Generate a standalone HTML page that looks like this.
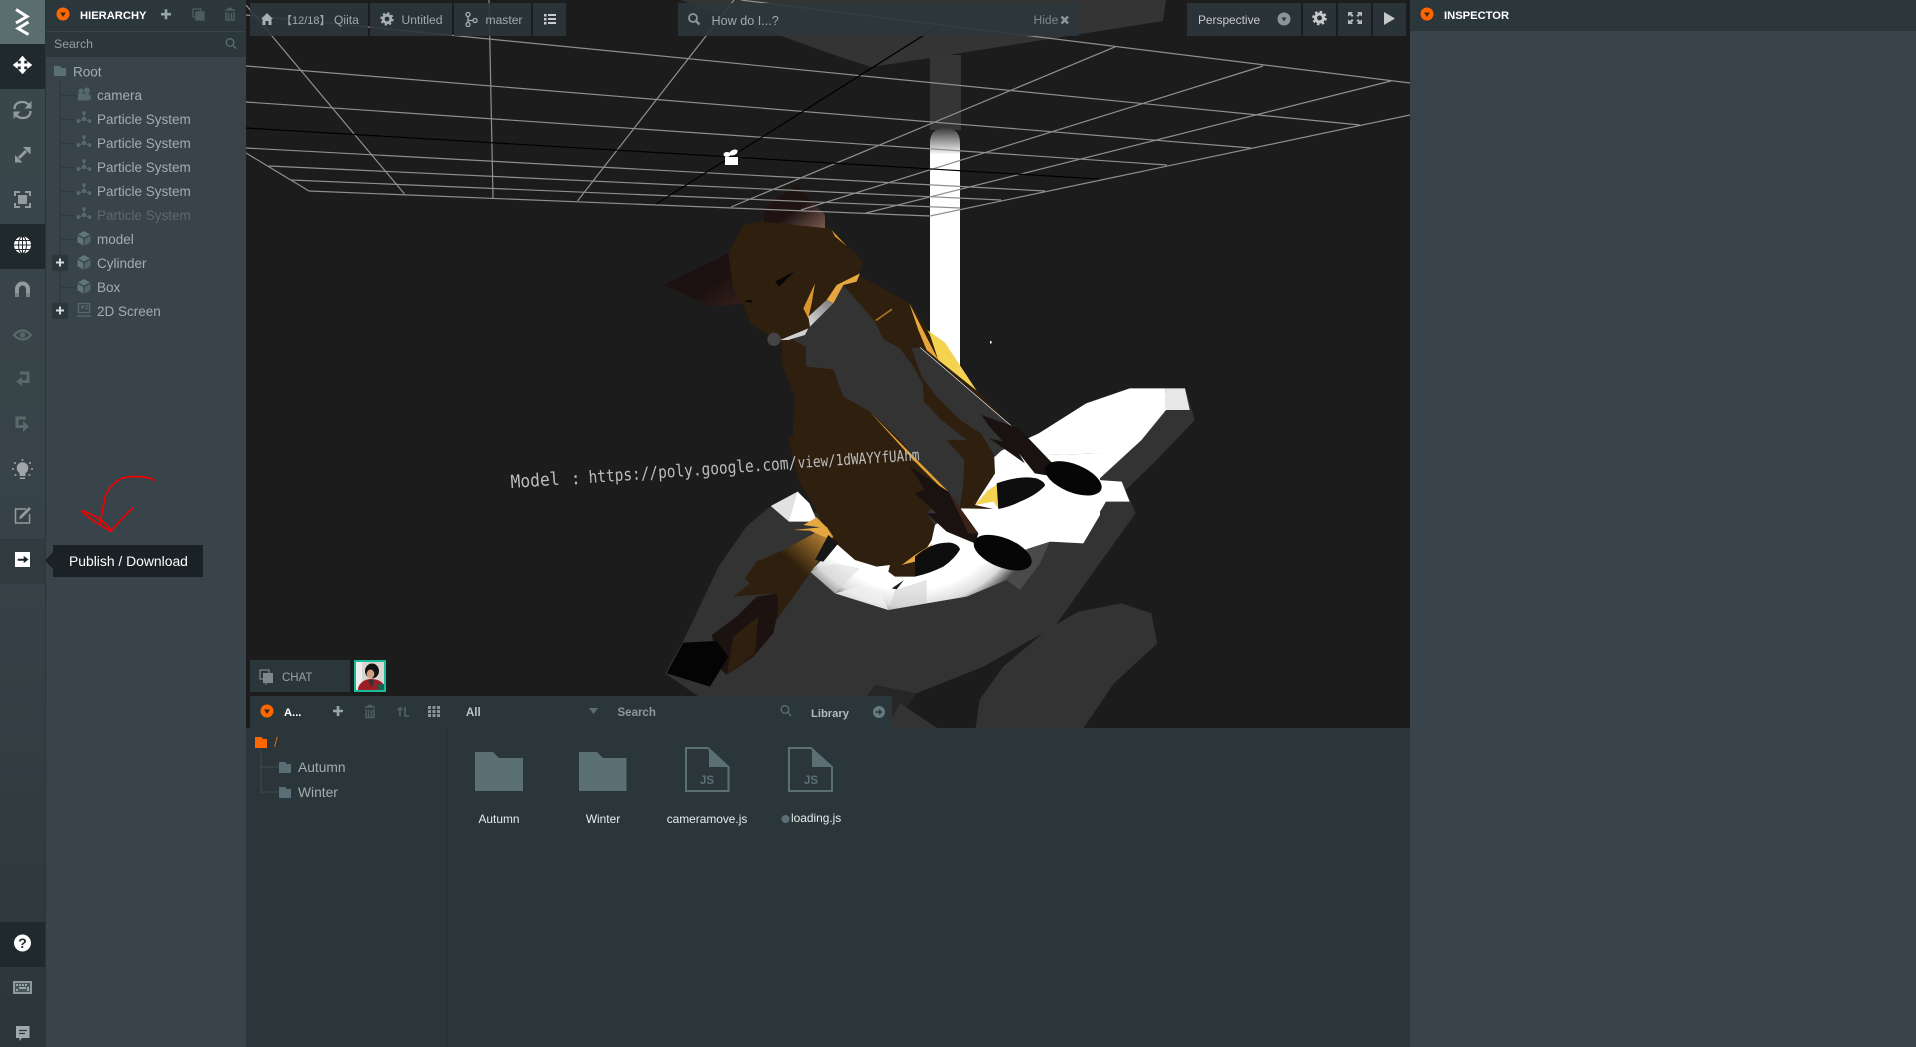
<!DOCTYPE html>
<html><head><meta charset="utf-8"><title>Editor</title>
<style>
html,body{margin:0;padding:0;background:#1c1c1c;width:1916px;height:1047px;overflow:hidden}
svg{display:block;position:absolute;left:0;top:0}
text{font-family:"Liberation Sans","Noto Sans CJK JP",sans-serif;font-size:13.5px;fill:#a3adaf}
.b{font-weight:bold;font-size:11.2px;fill:#fff}
.t{font-size:12.1px;fill:#a2a9aa}
.l{font-size:11.9px;fill:#e8ecec}
.m{font-family:"DejaVu Sans Mono","Liberation Mono",monospace;fill:#bdbdbd}
</style></head><body>
<svg width="1916" height="1047" viewBox="0 0 1916 1047" xmlns="http://www.w3.org/2000/svg">
<defs>
<linearGradient id="sb" x1="0" y1="0" x2="0" y2="1"><stop offset="0" stop-color="#3a474b"/><stop offset=".55" stop-color="#364247"/><stop offset="1" stop-color="#2b363a"/></linearGradient>
<linearGradient id="pole" x1="0" y1="0" x2="0" y2="1"><stop offset="0" stop-color="#3a3a3a"/><stop offset="1" stop-color="#fff"/></linearGradient>
<linearGradient id="ear" x1="0" y1="0" x2="1" y2="1"><stop offset=".55" stop-color="#1e1311"/><stop offset="1" stop-color="#7a5a50"/></linearGradient>
<linearGradient id="earl" x1="0" y1="0" x2="1" y2="1"><stop offset=".6" stop-color="#1c1110"/><stop offset="1" stop-color="#35211c"/></linearGradient>
<linearGradient id="tailg" x1="0" y1="1" x2="1" y2="0"><stop offset=".6" stop-color="#2e1f0e"/><stop offset="1" stop-color="#d99a3c"/></linearGradient>
<linearGradient id="col" x1="0" y1="1" x2="1" y2="0"><stop offset="0" stop-color="#dedede"/><stop offset="1" stop-color="#777"/></linearGradient>
<radialGradient id="arc" gradientUnits="userSpaceOnUse" cx="390" cy="130" r="410"><stop offset=".78" stop-color="#fff"/><stop offset=".9" stop-color="#ddd"/><stop offset="1" stop-color="#4a4a4a"/></radialGradient>
<g id="cube"><path d="M0-7 6-3.6 0-.4-6-3.6Z" fill="#62767a"/><path d="M-6.500-2.400-.7.900V7.500L-6.500 4.200Z" fill="#62767a"/><path d="M6.500-2.400.7.900V7.500L6.500 4.200Z" fill="#53666a"/></g>
<g id="part" fill="#566a6e"><circle cx="0" cy="-5" r="1.900"/><circle cx="-5.500" cy="3" r="1.900"/><circle cx="5.500" cy="3" r="1.900"/><circle cx="0" cy="1" r="2.200"/><path d="M-.5-4h1V1h-1z"/><path d="M-5 2.500 0 .5 5 2.500 5 3.500 0 1.500-5 3.500Z"/></g>
</defs>

<!-- viewport -->
<rect x="246" y="0" width="1164" height="728" fill="#1c1c1c"/>
<polygon points="680,0 840,57 871,67 930,58 961,53 1163,21 1166,0" fill="#343434"/>
<rect x="930" y="55" width="31" height="75" fill="#353535"/>
<path d="M930 155V143Q930 128 945 128Q960 128 960 143V155Z" fill="url(#pole)"/>
<rect x="930" y="154" width="30" height="212" fill="#fff"/>

<!-- gray hand -->
<g transform="translate(600 220) scale(.39526 .33333)">
<polygon points="950,1530 960,1440 1020,1340 1130,1230 1210,1175 1320,1150 1395,1180 1410,1270 1300,1390 1220,1530" fill="#333"/>
<polygon points="430,860 370,920 300,1040 210,1265 165,1360 250,1430 675,1430 695,1395 800,1420 970,1340 1150,1220 1270,1020 1355,880 1330,810 1400,730 1505,600 1480,505 1340,505 1000,720 900,900 560,880" fill="#333"/>
<polygon points="675,1430 695,1395 800,1420 740,1530 660,1530" fill="#262626"/>
<polygon points="760,1450 860,1530 720,1530" fill="#333"/>
<polygon points="432,858 500,815 545,890 478,905" fill="#e2e2e2"/>
<polygon points="500,815 530,850 550,905 478,905" fill="#fff"/>
<polygon points="1000,700 1110,640 1230,550 1340,505 1430,505 1432,570 1370,660 1260,780 1320,785 1340,845 1280,845 1220,965 1000,965" fill="#fff"/>
<polygon points="1430,505 1480,505 1492,570 1432,570" fill="#e8e8e8"/>
</g>
<!-- white arc and lower body (3x crop coords) -->
<g transform="translate(780 440) scale(.33333)">
<polygon points="90,395 175,310 330,340 450,250 560,180 645,50 960,40 960,225 910,310 810,305 780,370 720,450 680,420 560,470 440,490 325,510 165,460" fill="url(#arc)"/>
<polygon points="640,50 960,40 960,225 910,310 810,305 700,340 560,390 440,400 450,260" fill="#fff"/>
<polygon points="90,395 165,370 240,385 165,460" fill="#d8d8d8" fill-opacity=".5"/>
<polygon points="165,460 235,440 305,465 325,510" fill="#f0f0f0" fill-opacity=".8"/>
<polygon points="325,510 345,450 440,420 440,490" fill="#ccc" fill-opacity=".55"/>
<polygon points="335,445 372,420 350,448" fill="#222"/>
<!-- lower body -->
<polygon points="25,-10 360,-10 640,-10 645,100 600,170 585,195 640,207 545,205 480,230 440,210 465,255 455,300 410,375 405,410 345,410 325,395 330,375 290,380 225,360 145,290 105,205 60,130 40,60" fill="#2e1f0e"/>
</g>
<!-- left ear + upper body (3x crop coords) -->
<g transform="translate(700 220) scale(.33333)">
<polygon points="-111,195 85,100 100,210 130,250 37,260" fill="url(#earl)"/>
<polygon points="85,100 130,15 195,0 375,20 395,30 490,125 475,165 630,250 690,340 715,420 830,510 900,580 900,680 280,680 280,600 285,530 245,430 245,365 205,345 150,310 130,250 100,210" fill="#2e1f0e"/>
<polygon points="430,195 525,305 550,358 600,385 640,440 668,490 672,545 725,600 800,660 600,660 510,575 430,530 400,448 318,440 318,382 280,360 325,325 335,290 380,240" fill="#333"/>
<polygon points="635,385 660,382 960,640 885,710 843,640 780,600 710,530 665,470" fill="#333"/>
<path d="M660 382 960 640" stroke="#e8e8e8" stroke-width="2" fill="none"/>
<polygon points="682,330 735,368 830,512 715,420 690,345" fill="#f5d250"/>
<polygon points="628,250 715,420 680,390 655,330" fill="#e8a63c"/>
<polygon points="380,240 410,195 480,160 470,185 430,195 400,250" fill="#e6a640"/>
<polygon points="345,190 310,265 325,295 335,250" fill="#d9962f"/>
<polygon points="395,30 440,78 405,50" fill="#d9962f"/>
<polygon points="525,300 575,265 577,270 530,303" fill="#a56f24"/>
<polygon points="380,240 400,250 330,320 325,290" fill="url(#col)"/>
<polygon points="240,360 325,325 315,345 265,360" fill="#d0d0d0"/>
<circle cx="222" cy="358" r="20" fill="#444"/>
<polygon points="225,185 282,155 238,200" fill="#070707"/>
<polygon points="132,245 150,238 160,248" fill="#070707"/>
</g>
<!-- chest continuation, legs, paws -->
<g transform="translate(780 440) scale(.33333)">
<polygon points="355,-5 495,-5 553,60 550,130 540,200 465,255 440,220 500,155" fill="#333"/>
<polygon points="270,-84 505,155 495,155 400,60" fill="#e3a133"/>
</g>
<g transform="translate(600 220) scale(.39526 .33333)">
<polygon points="965,585 1060,625 1145,730 1150,770 1100,760 1060,700 1075,730 985,655 1020,665 985,620" fill="#1a1210"/>
</g>
<g transform="translate(780 440) scale(.33333)">
<ellipse cx="880" cy="115" rx="90" ry="42" transform="rotate(22 880 115)" fill="#060606"/>
<polygon points="585,195 625,150 670,122 652,130 655,205 640,185" fill="#f5d250"/>
<path d="M650 130Q720 105 770 115Q795 125 795 137Q770 165 720 185Q690 200 655 207Z" fill="#0e0e0e"/>
<polygon points="390,80 505,155 595,280 585,310 500,275 440,220 470,220 405,160 435,150" fill="#1a1210"/>
<polygon points="505,155 595,280 565,280" fill="#3a2218"/>
<ellipse cx="668" cy="338" rx="92" ry="44" transform="rotate(22 668 338)" fill="#060606"/>
<polygon points="365,375 405,345 460,310 405,365" fill="#e6a640"/>
<path d="M405 350Q455 305 510 308Q535 312 540 328Q525 355 490 380Q450 400 405 410Z" fill="#0e0e0e"/>
</g>
<!-- tail -->
<g transform="translate(440 440) scale(.33333)">
<polygon points="1180,290 1110,400 1010,540 1010,460 880,470 930,430 915,415 950,365 1030,330 1160,260" fill="url(#tailg)"/>
<polygon points="1090,255 1130,232 1160,262 1178,295 1150,290 1110,272 1060,270 1140,262" fill="#e6a640"/>
<polygon points="1165,285 1195,310 1150,365 1125,360" fill="#161616"/>
<polygon points="1010,460 1015,510 1000,580 940,650 860,705 845,690 815,585 890,530 950,470" fill="#1c1210"/>
<polygon points="955,530 945,640 860,705 880,590" fill="#2e1f0e"/>
<polygon points="680,700 730,608 830,603 865,650 810,740" fill="#040404"/>
</g>
<!-- ear top -->
<polygon points="764,222 764,208 797,184 812,202 825,215 825,228" fill="url(#ear)"/>

<!-- grid -->
<g stroke="#8f8f8f" stroke-width="1.200" fill="none">
<path d="M309 191 930 216"/><path d="M291 180 960 208"/><path d="M269 166 1001 200"/><path d="M246 148 1045 191"/>
<path d="M246 102 1167 165"/><path d="M246 66 1251 148"/><path d="M246 15 1360 125"/><path d="M741 0 1410 83"/>
<path d="M246 153 309 191"/><path d="M930 216 1410 115"/>
<path d="M246 5 404.500 194"/><path d="M489 0 493 198"/><path d="M734 0 577.500 201"/>
<path d="M731 207 1115.500 46.700"/><path d="M801 210 1263 66"/><path d="M866 213 1391 81"/>
</g>
<g stroke="#000" stroke-width="1.200" fill="none"><path d="M246 128 1099 179"/><path d="M656 204 940 25"/></g>

<!-- camera gizmo -->
<g fill="#fff"><rect x="725" y="157" width="13" height="8"/><ellipse cx="727" cy="154.500" rx="3.500" ry="2.500"/><ellipse cx="733.500" cy="152.500" rx="4.500" ry="2.600" transform="rotate(-25 733.500 152.500)"/></g>
<rect x="990" y="341" width="1.500" height="2.500" fill="#fff"/>

<!-- model text -->
<text class="m" transform="translate(511 488) rotate(-3.800)" x="0" y="0" style="font-size:18px" textLength="49" lengthAdjust="spacingAndGlyphs">Model</text>
<text class="m" transform="translate(571 484.500) rotate(-3.800)" x="0" y="0" style="font-size:17px">:</text>
<text class="m" transform="translate(589 483) rotate(-4)" x="0" y="0" style="font-size:17px" textLength="209" lengthAdjust="spacingAndGlyphs">https://poly.google.com/</text>
<text class="m" transform="translate(798 468) rotate(-3.700)" x="0" y="0" style="font-size:15.500px" textLength="122" lengthAdjust="spacingAndGlyphs">view/1dWAYYfUAhm</text>

<!-- top toolbar buttons -->
<g fill="#2c363b" fill-opacity=".9">
<rect x="250" y="3" width="118" height="33"/><rect x="370" y="3" width="82" height="33"/><rect x="454" y="3" width="77" height="33"/><rect x="533" y="3" width="33" height="33"/>
<rect x="678" y="3" width="401" height="33"/>
<rect x="1187" y="3" width="114" height="33"/><rect x="1303" y="3" width="33" height="33"/><rect x="1338" y="3" width="33" height="33"/><rect x="1373" y="3" width="33" height="33"/>
</g>
<path d="M267 13 273 19H271.500V25H268.500V21H265.500V25H262.500V19H261Z" fill="#a9b0b1"/>
<text x="281" y="24" style="font-size:11px;fill:#a2a9aa">【12/18】</text>
<text x="334" y="24" class="t">Qiita</text>
<g fill="none" stroke="#a9b0b1"><circle cx="387" cy="19" r="3.800" stroke-width="2.800"/><circle cx="387" cy="19" r="5.800" stroke-width="1.800" stroke-dasharray="2.300 2.250"/></g>
<text x="401.500" y="24" class="t">Untitled</text>
<g fill="none" stroke="#a9b0b1" stroke-width="1.300"><circle cx="468" cy="14.500" r="2"/><circle cx="468" cy="24.500" r="2"/><circle cx="475" cy="20.500" r="2"/><path d="M468 16.500V22.500M468 20.500H473"/></g>
<text x="485.500" y="24" class="t">master</text>
<g fill="#c8cdcd"><rect x="544" y="14" width="2.500" height="2.500"/><rect x="544" y="18" width="2.500" height="2.500"/><rect x="544" y="22" width="2.500" height="2.500"/><rect x="548" y="14" width="8" height="2"/><rect x="548" y="18" width="8" height="2"/><rect x="548" y="22" width="8" height="2"/></g>
<g fill="none" stroke="#8e9698" stroke-width="1.800"><circle cx="693" cy="18" r="4"/><path d="M696 21 699.500 24.500" stroke-width="2.400"/></g>
<text x="711.500" y="25" class="t" style="font-size:12.600px">How do I...?</text>
<text x="1033.500" y="24" class="t" style="fill:#808787">Hide</text>
<path d="M1061.500 16.500 1068 23.500M1068 16.500 1061.500 23.500" stroke="#8f9697" stroke-width="2.400"/>
<text x="1198" y="24" class="t" style="fill:#c7cbcb;font-size:11.900px">Perspective</text>
<circle cx="1284" cy="19" r="6.500" fill="#8b9496"/><path d="M1281.500 17.500H1286.500L1284 21.500Z" fill="#2c363b"/>
<g fill="none" stroke="#c6cbcb"><circle cx="1319.500" cy="18" r="4" stroke-width="3"/><circle cx="1319.500" cy="18" r="6.300" stroke-width="2" stroke-dasharray="2.500 2.450"/></g>
<g fill="#b5bbbb"><path d="M1348 12h5l-1.500 1.500 2 2-1.500 1.500-2-2-2 1.500zM1362 12h-5l1.500 1.500-2 2 1.500 1.500 2-2 2 1.500zM1348 24h5l-1.500-1.500 2-2-1.500-1.500-2 2-2-1.500zM1362 24h-5l1.500-1.500-2-2 1.500-1.500 2 2 2-1.500z"/></g>
<path d="M1384 12V25L1395 18.500Z" fill="#c3c8c8"/>

<!-- chat -->
<rect x="250" y="660" width="100" height="32" fill="#2b363b"/>
<g><rect x="260" y="670" width="9" height="9" fill="none" stroke="#7d898b" stroke-width="1.200"/><path d="M263 673H273V683H267.500L265.500 685V683H263Z" fill="#7d898b"/></g>
<text x="282" y="681" style="font-size:11.500px;fill:#98a2a3">CHAT</text>
<!-- avatar -->
<rect x="354" y="660" width="32" height="32" fill="#1abc9c"/>
<rect x="356" y="662" width="28" height="28" fill="#d9d6d2"/>
<rect x="356" y="662" width="6" height="28" fill="#eee"/>
<ellipse cx="372" cy="671" rx="7" ry="7.500" fill="#141414"/>
<ellipse cx="370.500" cy="674" rx="3.800" ry="4.500" fill="#cfa284"/>
<path d="M358 690C358 684 364 679 371 679C378 679 383 682 384 686V690Z" fill="#9c1e22"/>
<path d="M368 680 374 680 372 688Z" fill="#333"/>
<rect x="378" y="684" width="6" height="6" fill="#1d5f55"/>

<!-- hierarchy panel -->
<rect x="46" y="0" width="200" height="1047" fill="#38444a"/>
<rect x="46" y="0" width="200" height="31" fill="#2c373c"/>
<rect x="46" y="31" width="200" height="1" fill="#38444a"/>
<rect x="46" y="32" width="200" height="25" fill="#2c373c"/>
<circle cx="63" cy="14" r="6.500" fill="#f60"/><path d="M60 12.500H66L63 17Z" fill="#3a2a1a"/>
<text x="80" y="19" class="b">HIERARCHY</text>
<path d="M161 14.200H171M166 9.200V19.200" stroke="#98a5a7" stroke-width="2.600"/>
<g fill="none" stroke="#4f5d61" stroke-width="1.300"><rect x="193" y="9" width="8" height="8"/><rect x="196" y="12" width="8" height="8" fill="#4f5d61"/></g>
<path d="M225 10H235M226 12V20H234V12M228.500 13V19M231.500 13V19M228.500 10V8.500H231.500V10" fill="none" stroke="#4f5d61" stroke-width="1.500"/>
<text x="54" y="48" style="font-size:12.300px;fill:#939ea0">Search</text>
<g fill="none" stroke="#5f6e72" stroke-width="1.300"><circle cx="230" cy="42.500" r="3.800"/><path d="M233 45.500 236 48.500"/></g>

<!-- tree lines -->
<g stroke="#303b40" stroke-width="1.300" fill="none">
<path d="M60 80V312"/><path d="M60 95.500H76M60 119.500H76M60 143.500H76M60 167.500H76M60 191.500H76M60 215.500H76M60 239.500H76M60 287.500H76"/>
</g>
<path d="M54 66H60L62 68H66V76H54Z" fill="#5a6f75"/>
<text x="73" y="76.500">Root</text>
<g fill="#566a6e"><circle cx="81" cy="91" r="2.500"/><circle cx="87" cy="90.500" r="3"/><rect x="78" y="93.500" width="11" height="7"/><path d="M89 96 91 94.500V100L89 98.500Z"/></g>
<use href="#part" x="84" y="118"/><use href="#part" x="84" y="142"/><use href="#part" x="84" y="166"/><use href="#part" x="84" y="190"/><use href="#part" x="84" y="214"/>
<use href="#cube" x="84" y="238"/><use href="#cube" x="84" y="262"/><use href="#cube" x="84" y="286"/>
<g fill="none" stroke="#566a6e" stroke-width="1.300"><rect x="78.500" y="303.500" width="11" height="9"/><path d="M77 316H91"/></g><rect x="81" y="305.500" width="3" height="3" fill="#566a6e"/><rect x="85" y="305.500" width="3" height="1.200" fill="#566a6e"/><rect x="85" y="308" width="3" height="1.200" fill="#566a6e"/>
<text x="97" y="100">camera</text>
<text x="97" y="124">Particle System</text>
<text x="97" y="148">Particle System</text>
<text x="97" y="172">Particle System</text>
<text x="97" y="196">Particle System</text>
<text x="97" y="220" style="fill:#5d686b">Particle System</text>
<text x="97" y="244">model</text>
<text x="97" y="268">Cylinder</text>
<text x="97" y="292">Box</text>
<text x="97" y="316">2D Screen</text>
<rect x="52" y="255" width="16" height="16" fill="#2c373c"/><path d="M56 262.500H64M60 258.500V266.500" stroke="#d5dadb" stroke-width="2"/>
<rect x="52" y="303" width="16" height="16" fill="#2c373c"/><path d="M56 310.500H64M60 306.500V314.500" stroke="#d5dadb" stroke-width="2"/>

<!-- sidebar -->
<rect x="0" y="0" width="45" height="1047" fill="url(#sb)"/>
<rect x="45" y="0" width="1" height="1047" fill="#2a3539"/>
<rect x="0" y="0" width="45" height="44" fill="#5b6e6f"/>
<path d="M16 9.500 27 16.500 16 23M28.500 22 18 28.500 28.500 34.500" fill="none" stroke="#fff" stroke-width="3"/>
<rect x="0" y="44" width="45" height="45" fill="#20292c"/>
<rect x="0" y="224" width="45" height="45" fill="#20292c"/>
<rect x="0" y="539" width="45" height="45" fill="#303b40"/>
<rect x="0" y="922" width="45" height="45" fill="#20292c"/>
<!-- move -->
<path d="M22.500 56 26.500 60.500H24V63.800H27.500V61.500L32 65 27.500 68.500V66.200H24V69.500H26.500L22.500 74 18.500 69.500H21V66.200H17.500V68.500L13 65 17.500 61.500V63.800H21V60.500H18.500Z" fill="#fff" stroke="#fff" stroke-width=".5"/>
<!-- rotate -->
<g fill="none" stroke="#949b9c" stroke-width="2.300"><path d="M14.500 109C14.500 104 18 102 22.500 102C25.500 102 27.500 103 29 105.500"/><path d="M30.500 111C30.500 116 27 118 22.500 118C19.500 118 17.500 117 16 114.500"/></g>
<path d="M31.500 101V108.500H24.500Z" fill="#949b9c"/><path d="M13.500 119V111.500H20.500Z" fill="#949b9c"/>
<!-- scale -->
<path d="M19 158 26 151" stroke="#949b9c" stroke-width="3" fill="none"/>
<path d="M30.500 147V154.500L23 147Z" fill="#949b9c"/><path d="M15 162.500V155L22.500 162.500Z" fill="#949b9c"/>
<!-- focus -->
<g fill="none" stroke="#949b9c" stroke-width="2"><path d="M15 196V192H20M25 192H30V196M30 203V207H25M20 207H15V203"/></g><rect x="18" y="195" width="9" height="9" fill="#949b9c"/>
<!-- globe -->
<circle cx="22.500" cy="245" r="8.500" fill="#fff"/>
<g fill="none" stroke="#20292c" stroke-width="1"><ellipse cx="22.500" cy="245" rx="4" ry="8.500"/><path d="M22.500 236.500V253.500M14 245H31M15 240.500H30M15 249.500H30"/></g>
<!-- magnet -->
<path d="M17 297V289A5.500 5.500 0 0 1 28 289V297" fill="none" stroke="#949b9c" stroke-width="4"/><rect x="15" y="293" width="4" height="4" fill="#7a8284"/><rect x="26" y="293" width="4" height="4" fill="#7a8284"/>
<!-- eye -->
<path d="M14 335Q22.500 326 31 335Q22.500 344 14 335Z" fill="none" stroke="#5b686b" stroke-width="2.200"/><circle cx="22.500" cy="335" r="2.800" fill="#5b686b"/>
<!-- undo -->
<path d="M18 381.500H28V373H20" fill="none" stroke="#5b686b" stroke-width="3"/><path d="M22 377 16 381.500 22 386Z" fill="#5b686b"/>
<!-- redo -->
<path d="M25 426.500H17V418H26" fill="none" stroke="#5b686b" stroke-width="3"/><path d="M23 421 29 426.500 23 432Z" fill="#5b686b"/>
<!-- bulb -->
<circle cx="22.500" cy="468" r="5.800" fill="#a0a6a7"/><path d="M19.500 472H25.500V476H19.500Z" fill="#a0a6a7"/><path d="M20 477.500H25V479H20Z" fill="#a0a6a7"/>
<g fill="#a0a6a7"><circle cx="22.500" cy="460" r="1"/><circle cx="15" cy="463" r="1"/><circle cx="30" cy="463" r="1"/><circle cx="13" cy="469" r="1"/><circle cx="32" cy="469" r="1"/><circle cx="15.500" cy="475" r="1"/><circle cx="29.500" cy="475" r="1"/></g>
<!-- edit -->
<path d="M26 509H15.500V523H29.500V514" fill="none" stroke="#949b9c" stroke-width="1.500"/><path d="M19 519.500 20 516 29 507 31 509 22 518Z" fill="#949b9c"/>
<!-- publish -->
<rect x="15" y="552" width="15" height="15" fill="#fff"/><path d="M18 559H24V556.500L28 559.500 24 562.500V560.500H18Z" fill="#1c2428" stroke="#1c2428" stroke-width=".6"/>
<!-- tooltip -->
<path d="M53 552 45 560.500 53 569Z" fill="#1b2226"/>
<rect x="53" y="545" width="150" height="32" fill="#1b2226"/>
<text x="69" y="566" style="font-size:13.900px;fill:#fff">Publish / Download</text>
<!-- help -->
<circle cx="22.500" cy="943" r="8.500" fill="#fff"/><text x="22.500" y="948" text-anchor="middle" style="font-size:14px;font-weight:bold;fill:#20292c">?</text>
<!-- keyboard -->
<rect x="13" y="981" width="19" height="13" fill="#8f989a"/><rect x="15" y="983" width="15" height="9" fill="#47565a"/><g fill="#9aa3a5"><rect x="16" y="984" width="2" height="2"/><rect x="19" y="984" width="2" height="2"/><rect x="22" y="984" width="2" height="2"/><rect x="25" y="984" width="2" height="2"/><rect x="16" y="989" width="2" height="2"/><rect x="19" y="987" width="7" height="2"/><rect x="27" y="987" width="2" height="4"/></g>
<!-- comment -->
<path d="M16 1026H29.500V1038H22L19.500 1041V1038H16Z" fill="#a2a9aa"/><path d="M19 1030.500H27M19 1033.500H25" stroke="#2b363a" stroke-width="1.200"/>

<!-- assets toolbar -->
<rect x="250" y="696" width="642" height="32" fill="#2b363b"/>
<circle cx="267" cy="711" r="6.500" fill="#f60"/><path d="M264 709.500H270L267 714Z" fill="#3a2a1a"/>
<text x="284" y="716" class="b">A...</text>
<path d="M333 711H343M338 706V716" stroke="#98a5a7" stroke-width="2.600"/>
<path d="M365 707H375M366 709V717.500H374V709M368.500 710V716.500M371.500 710V716.500M368.500 707V705.500H371.500V707" fill="none" stroke="#4f5d61" stroke-width="1.500"/>
<path d="M400 716V708L397.500 710M400 708 402.500 710M405 707V716H409" fill="none" stroke="#4f5d61" stroke-width="1.800"/>
<g fill="#8b9597"><rect x="428" y="706" width="3" height="3"/><rect x="432.500" y="706" width="3" height="3"/><rect x="437" y="706" width="3" height="3"/><rect x="428" y="710" width="3" height="3"/><rect x="432.500" y="710" width="3" height="3"/><rect x="437" y="710" width="3" height="3"/><rect x="428" y="714" width="3" height="3"/><rect x="432.500" y="714" width="3" height="3"/><rect x="437" y="714" width="3" height="3"/></g>
<text x="466" y="716" style="font-size:11.500px;font-weight:bold;fill:#bcc4c5">All</text>
<path d="M589 708H598L593.500 714Z" fill="#5b6d71"/>
<text x="617.500" y="716" style="font-size:11.500px;font-weight:bold;fill:#8e999b">Search</text>
<g fill="none" stroke="#5f6e72" stroke-width="1.300"><circle cx="785" cy="709.500" r="3.800"/><path d="M788 712.500 791 716"/></g>
<text x="811" y="717" style="font-size:11.200px;font-weight:bold;fill:#b3bbbc">Library</text>
<circle cx="879" cy="712" r="6" fill="#66797d"/><path d="M875.500 711.200H879V709L882.500 712 879 715V712.800H875.500Z" fill="#2b363b"/>

<!-- assets panel -->
<rect x="246" y="728" width="1164" height="319" fill="#2b363b"/>
<rect x="446" y="728" width="1" height="319" fill="#232d31"/>
<path d="M255 737H261.500L263 739H267V748H255Z" fill="#f60"/>
<text x="274" y="747" style="fill:#d2691e">/</text>
<g stroke="#39464a" stroke-width="1.300" fill="none"><path d="M261 750V793M261 767H279M261 792H279"/></g>
<path d="M279 762H285L287 764H291V773H279Z" fill="#5a6f75"/>
<path d="M279 787H285L287 789H291V798H279Z" fill="#5a6f75"/>
<text x="298" y="772" style="font-size:13.800px">Autumn</text>
<text x="298" y="797" style="font-size:13.800px">Winter</text>
<path d="M475 752H493L499 758H523V791H475Z" fill="#5b7073"/>
<path d="M579 752H597L603 758H626.500V791H579Z" fill="#5b7073"/>
<g fill="none" stroke="#5b7073" stroke-width="2">
<path d="M686 748H708L728.500 767V791H686Z"/><path d="M789 748H811L832 767V791H789Z"/></g>
<path d="M709 748 729 767H709Z" fill="#5b7073"/><path d="M812 748 832 767H812Z" fill="#5b7073"/>
<text x="707" y="784" text-anchor="middle" style="font-size:11.500px;font-weight:bold;fill:#5b7073">JS</text>
<text x="811" y="784" text-anchor="middle" style="font-size:11.500px;font-weight:bold;fill:#5b7073">JS</text>
<text x="499" y="823" text-anchor="middle" class="l">Autumn</text>
<text x="603" y="823" text-anchor="middle" class="l">Winter</text>
<text x="707" y="823" text-anchor="middle" class="l">cameramove.js</text>
<circle cx="785.500" cy="819" r="4" fill="#5b7073"/>
<text x="791" y="822" class="l">loading.js</text>

<!-- inspector -->
<rect x="1410" y="0" width="506" height="1047" fill="#38444a"/>
<rect x="1410" y="0" width="506" height="31" fill="#2c373c"/>
<circle cx="1427" cy="14" r="6.500" fill="#f60"/><path d="M1424 12.500H1430L1427 17Z" fill="#3a2a1a"/>
<text x="1444" y="19" class="b">INSPECTOR</text>

<!-- red arrow -->
<g transform="translate(0 340) scale(.33333)" fill="none" stroke="#f40000" stroke-width="5" stroke-linecap="round" stroke-linejoin="round">
<path d="M462 422C455 410 400 405 365 415C345 425 325 445 317 465C310 495 305 525 300 550"/>
<path d="M245 512C265 535 300 555 335 575C320 545 275 520 245 512Z"/>
<path d="M332 572C355 550 380 520 400 503"/>
</g>
</svg>
</body></html>
